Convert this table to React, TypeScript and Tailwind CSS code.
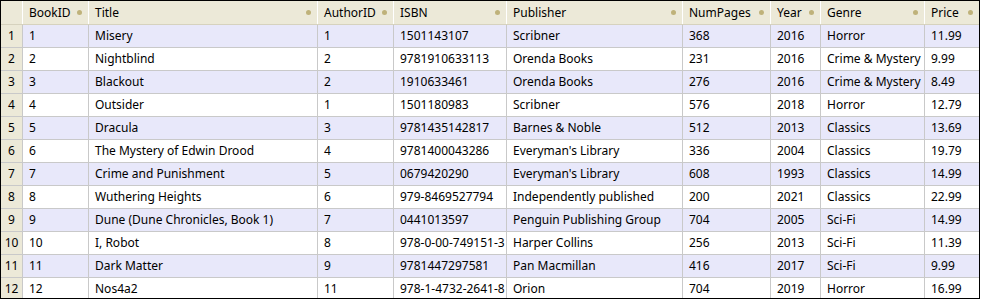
import type { ReactNode } from 'react'

interface Column {
  key: string
  label: string
  width: string
}

const COLUMNS: Column[] = [
  { key: 'id', label: 'BookID', width: 'w-[66px]' },
  { key: 'title', label: 'Title', width: 'w-[229px]' },
  { key: 'author', label: 'AuthorID', width: 'w-[76px]' },
  { key: 'isbn', label: 'ISBN', width: 'w-[113px]' },
  { key: 'publisher', label: 'Publisher', width: 'w-[176px]' },
  { key: 'pages', label: 'NumPages', width: 'w-[88px]' },
  { key: 'year', label: 'Year', width: 'w-[50px]' },
  { key: 'genre', label: 'Genre', width: 'w-[104px]' },
  { key: 'price', label: 'Price', width: 'w-[54px]' }
]

const ROWS: string[][] = [
  ['1', 'Misery', '1', '1501143107', 'Scribner', '368', '2016', 'Horror', '11.99'],
  ['2', 'Nightblind', '2', '9781910633113', 'Orenda Books', '231', '2016', 'Crime & Mystery', '9.99'],
  ['3', 'Blackout', '2', '1910633461', 'Orenda Books', '276', '2016', 'Crime & Mystery', '8.49'],
  ['4', 'Outsider', '1', '1501180983', 'Scribner', '576', '2018', 'Horror', '12.79'],
  ['5', 'Dracula', '3', '9781435142817', 'Barnes & Noble', '512', '2013', 'Classics', '13.69'],
  ['6', 'The Mystery of Edwin Drood', '4', '9781400043286', "Everyman's Library", '336', '2004', 'Classics', '19.79'],
  ['7', 'Crime and Punishment', '5', '0679420290', "Everyman's Library", '608', '1993', 'Classics', '14.99'],
  ['8', 'Wuthering Heights', '6', '979-8469527794', 'Independently published', '200', '2021', 'Classics', '22.99'],
  ['9', 'Dune (Dune Chronicles, Book 1)', '7', '0441013597', 'Penguin Publishing Group', '704', '2005', 'Sci-Fi', '14.99'],
  ['10', 'I, Robot', '8', '978-0-00-749151-3', 'Harper Collins', '256', '2013', 'Sci-Fi', '11.39'],
  ['11', 'Dark Matter', '9', '9781447297581', 'Pan Macmillan', '416', '2017', 'Sci-Fi', '9.99'],
  ['12', 'Nos4a2', '11', '978-1-4732-2641-8', 'Orion', '704', '2019', 'Horror', '16.99']
]

const HeaderCell = ({ label, width }: { label: string; width: string }) => (
  <div className={`${width} shrink-0 flex items-center justify-between pl-[6px] pr-[6px] border-r border-white last:border-r-0`}>
    <span className="whitespace-nowrap">{label}</span>
    <span className="w-[5px] h-[5px] rounded-full bg-[#bfb27a] shrink-0" />
  </div>
)

const Cell = ({ width, children, last }: { width: string; children: ReactNode; last: boolean }) => (
  <div className={`${width} shrink-0 flex items-center pl-[6px] whitespace-nowrap overflow-hidden ${last ? '' : 'border-r border-[#c9c9c9]'}`}>
    {children}
  </div>
)

const App = () => {
  return (
    <div className="w-[981px] h-[299px] bg-white">
      <div
        className="w-[980px] h-[299px] border border-black flex flex-col overflow-hidden text-[12px] text-black leading-[16px]"
        style={{ fontFamily: '"Noto Sans", "Open Sans", sans-serif' }}
      >
        <div className="h-[24px] shrink-0 flex bg-[#ece9d8] border-b border-[#d6d2be]">
          <div className="w-[22px] shrink-0 border-r border-white" />
          {COLUMNS.map((c) => (
            <HeaderCell key={c.key} label={c.label} width={c.width} />
          ))}
        </div>
        {ROWS.map((row, i) => (
          <div
            key={row[0]}
            className={`h-[23px] shrink-0 flex border-b border-[#c9c9c9] last:border-b-0 last:h-[21px] ${i % 2 === 0 ? 'bg-[#e8e8fa]' : 'bg-white'}`}
          >
            <div className="w-[22px] shrink-0 flex items-center justify-center bg-[#ece9d8] border-r border-[#c9c9c9]">
              {i + 1}
            </div>
            {COLUMNS.map((c, j) => (
              <Cell key={c.key} width={c.width} last={j === COLUMNS.length - 1}>
                {row[j]}
              </Cell>
            ))}
          </div>
        ))}
      </div>
    </div>
  )
}

export default App
